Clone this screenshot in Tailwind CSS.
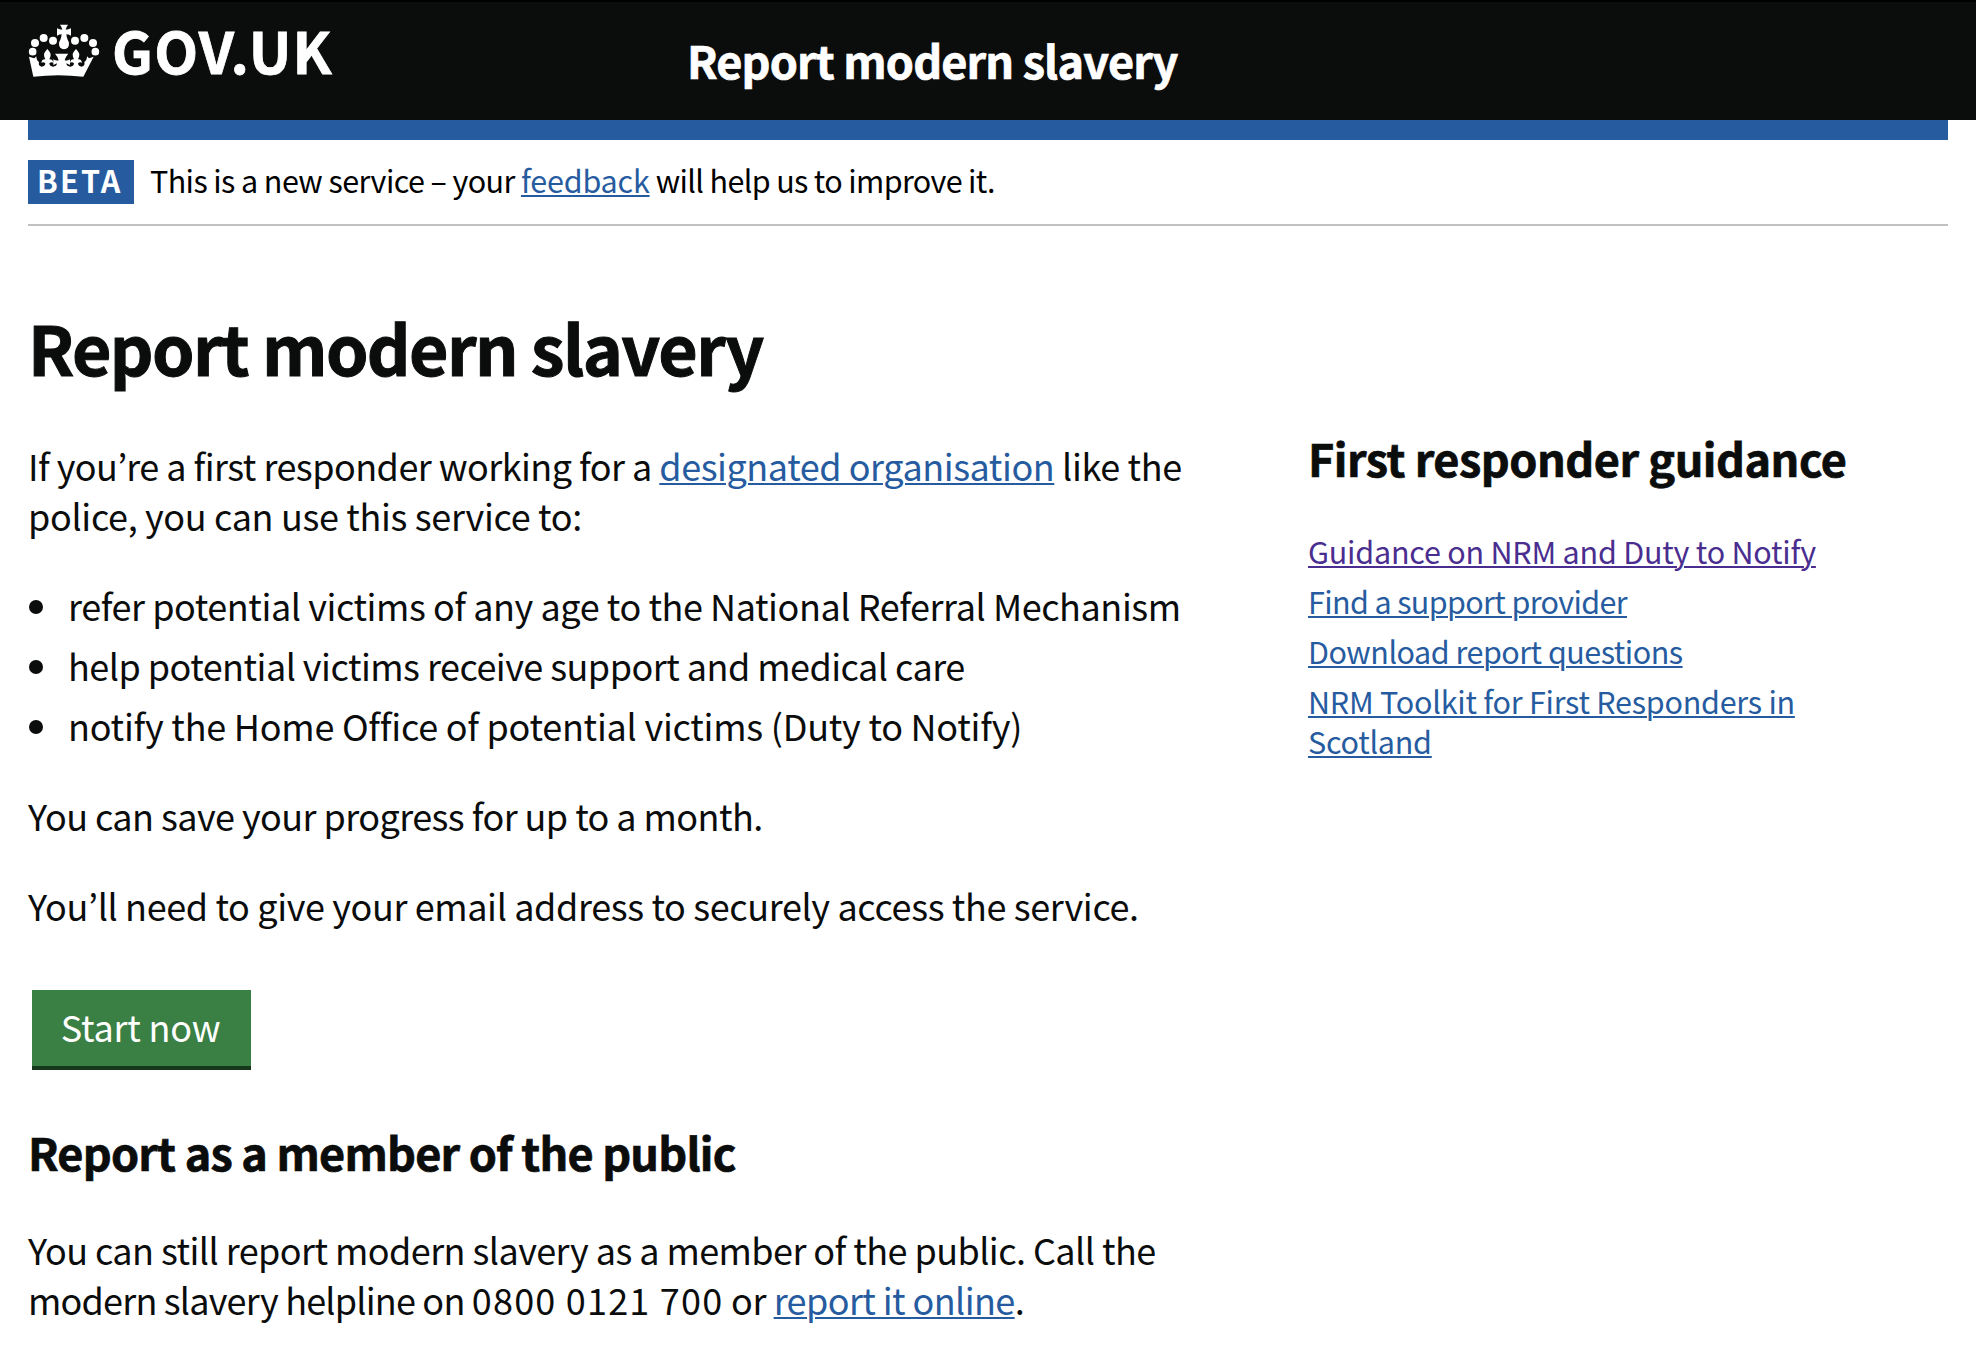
<!DOCTYPE html>
<html lang="en">
<head>
<meta charset="utf-8">
<title>Report modern slavery - GOV.UK</title>
<script src="https://cdn.jsdelivr.net/npm/@tailwindcss/browser@4"></script>
</head>
<body class="min-h-[1350px] overflow-hidden bg-white font-['Noto_Sans_CJK_KR','Noto_Sans',sans-serif] text-[36px] leading-[50px] text-[#0b0c0c] whitespace-nowrap">
<header class="flex h-[120px] items-start border-t-2 border-black bg-[#0b0c0c] px-7 text-white">
  <a class="flex w-[659px] items-start pt-[17px]">
    <svg class="mt-[5px] h-[53px] w-[72px] shrink-0" viewBox="24 26 216 159" fill="currentColor" aria-hidden="true">
      <circle cx="38" cy="109" r="11.5"/><circle cx="45" cy="83" r="12"/><circle cx="71" cy="68" r="12"/><circle cx="99" cy="76" r="12"/>
      <circle cx="226" cy="109" r="11.5"/><circle cx="219" cy="83" r="12"/><circle cx="193" cy="68" r="12"/><circle cx="165" cy="76" r="12"/>
      <path d="M120 28h24q-6 8-7 15q8 0 16-4v22q-8-4-14-4q1 10 4 16q4 6 4 12q0 15-15 17q-15-2-15-17q0-6 4-12q3-6 4-16q-6 0-14 4v-22q8 4 16 4q-1-7-7-15z"/>
      <path d="M27 124l16 5l6-6q0 12 8 17q-3 12 8 14q10 0 11-10q-5-6-12-2q2-11 12-10q-4-8-4-14q0-6 10-17q10 11 10 17q0 6-4 14q10-1 12 10q-7-4-12 2q1 10 11 10q11 0 12-10l-11 5v-17q8 5 16 3q-1-9-11-20h40q-10 11-11 20q8 2 16-3v17l-11-5q1 10 12 10q10 0 11-10q-5-6-12-2q2-11 12-10q-4-8-4-14q0-6 10-17q10 11 10 17q0 6-4 14q10-1 12 10q-7-4-12 2q1 10 11 10q11-2 8-14q8-5 8-17l6 6l14-5l-31 60q-75-9-150 0z"/>
    </svg>
    <span class="ml-3 text-[57px] leading-[60px] font-bold tracking-[1.29px] [-webkit-text-stroke:0.8px]">GOV.UK</span>
  </a>
  <span class="pt-7 text-[45px] leading-[60px] font-bold tracking-[-0.85px] [-webkit-text-stroke:0.7px]">Report modern slavery</span>
</header>
<div class="mx-7 h-5 bg-[#265c9f]"></div>
<div class="mx-7 flex h-[86px] items-start border-b-2 border-[#bfc1c3] pt-5 text-[30.5px] leading-10 text-black">
  <strong class="flex h-11 w-[106px] bg-[#265c9f] pl-[9px] leading-10 font-bold tracking-[2.2px] text-white">BETA</strong>
  <p class="ml-4 whitespace-pre"><span class="tracking-[-0.59px]">This is a new service – your </span><a class="tracking-[-0.2px] text-[#265c9f] underline decoration-2 underline-offset-[2px]">feedback</a><span class="tracking-[-0.64px]"> will help us to improve it.</span></p>
</div>
<main class="mx-7 pt-[81px]">
  <h1 class="text-[68px] leading-[80px] font-bold tracking-[-1.6px] [-webkit-text-stroke:1px]">Report modern slavery</h1>
  <div class="mt-[53px] grid grid-cols-[1220px_1fr] gap-x-[60px]">
    <div>
      <p class="whitespace-pre"><span class="tracking-[-0.54px]">If you’re a first responder working for a </span><a class="tracking-[-0.45px] text-[#265c9f] underline decoration-2 underline-offset-[2px]">designated organisation</a><span class="tracking-[-0.35px]"> like the</span><br><span class="tracking-[-0.34px]">police, you can use this service to:</span></p>
      <ul class="mt-10 flex flex-col gap-2.5">
        <li class="flex items-center"><i class="mt-1 mr-[25px] ml-px size-[14px] shrink-0 rounded-full bg-[#0b0c0c]"></i><span class="tracking-[-0.44px]">refer potential victims of any age to the National Referral Mechanism</span></li>
        <li class="flex items-center"><i class="mt-1 mr-[25px] ml-px size-[14px] shrink-0 rounded-full bg-[#0b0c0c]"></i><span class="tracking-[-0.53px]">help potential victims receive support and medical care</span></li>
        <li class="flex items-center"><i class="mt-1 mr-[25px] ml-px size-[14px] shrink-0 rounded-full bg-[#0b0c0c]"></i><span class="tracking-[-0.25px]">notify the Home Office of potential victims (Duty to Notify)</span></li>
      </ul>
      <p class="mt-10 tracking-[-0.56px]">You can save your progress for up to a month.</p>
      <p class="mt-10 tracking-[-0.37px]">You’ll need to give your email address to securely access the service.</p>
      <button class="mt-[60px] ml-1 flex h-20 w-[219px] justify-center border-b-4 border-[#16371c] bg-[#3a8045] pt-[11px] pr-0.5 tracking-[-0.22px] text-white">Start now</button>
      <h2 class="mt-[52px] text-[45px] leading-[60px] font-bold tracking-[-0.8px] [-webkit-text-stroke:0.7px]">Report as a member of the public</h2>
      <p class="mt-[42px] whitespace-pre"><span class="tracking-[-0.56px]">You can still report modern slavery as a member of the public. Call the</span><br><span class="tracking-[-0.8px]">modern slavery helpline on </span><span class="tracking-[1.2px]">0800 0121 700</span><span class="tracking-[-0.4px]"> or </span><a class="tracking-[-0.6px] text-[#265c9f] underline decoration-2 underline-offset-[2px]">report it online</a>.</p>
    </div>
    <aside class="-mt-3">
      <h2 class="text-[45px] leading-[60px] font-bold tracking-[-0.49px] [-webkit-text-stroke:0.7px]">First responder guidance</h2>
      <ul class="mt-[43px] flex flex-col gap-2.5 text-[30.5px] leading-10 text-[#265c9f]">
        <li><a class="tracking-[-0.22px] text-[#4a2e8f] underline decoration-2 underline-offset-[2px]">Guidance on NRM and Duty to Notify</a></li>
        <li><a class="tracking-[-0.63px] underline decoration-2 underline-offset-[2px]">Find a support provider</a></li>
        <li><a class="tracking-[-0.5px] underline decoration-2 underline-offset-[2px]">Download report questions</a></li>
        <li><a class="tracking-[-0.25px] underline decoration-2 underline-offset-[2px]">NRM Toolkit for First Responders in<br>Scotland</a></li>
      </ul>
    </aside>
  </div>
</main>
</body>
</html>
